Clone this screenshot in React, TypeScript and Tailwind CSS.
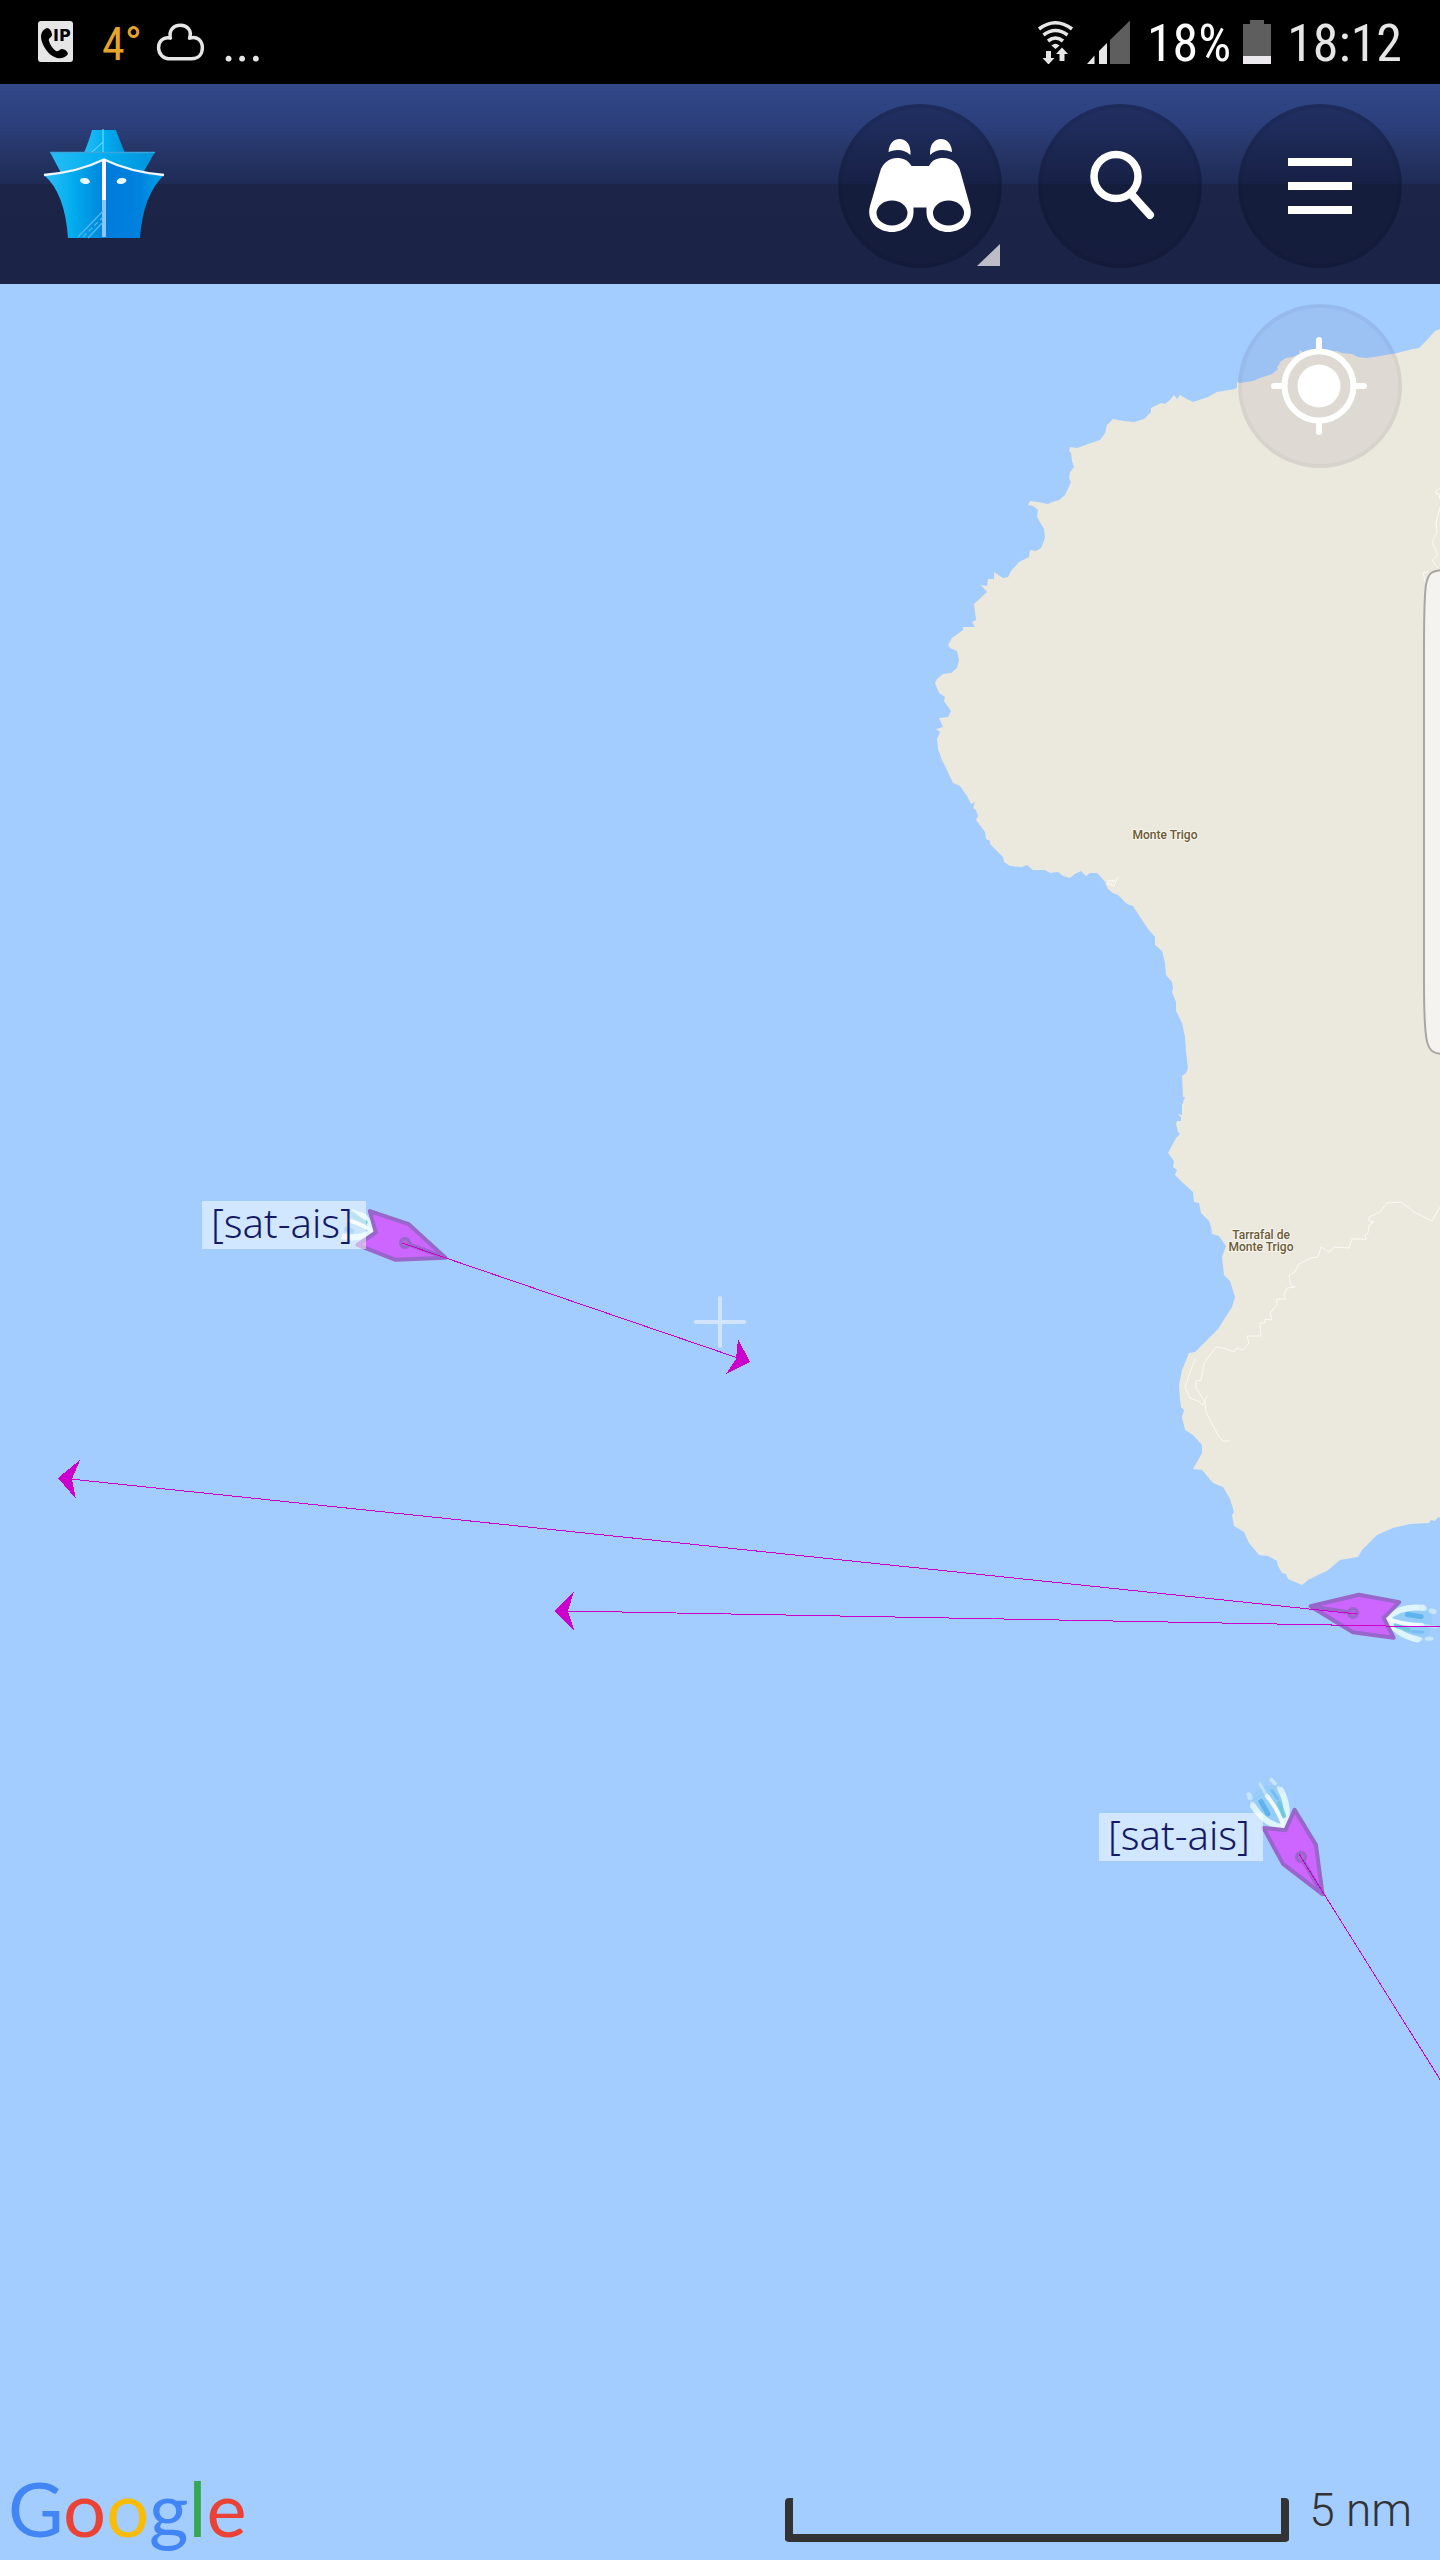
import type { ReactNode } from 'react';

const COAST =
  '1440,329 1435,331 1427,340 1419,348 1413,349 1397,353 1380,356 1367,358 1358,357 1352,354 1342,353 1337,351 1327,352 1318,355 1310,352 1303,352 1299,350 1300,354 1292,357 1286,358 1280,362 1279,365 1277,367 1278,369 1272,374 1260,378 1253,381 1240,383 1237,382 1237,387 1235,389 1223,391 1217,392 1208,397 1193,402 1185,398 1180,395 ' +
  '1177,399 1174,395 1170,400 1165,404 1161,403 1151,408 1151,412 1144,419 1134,422 1124,421 1113,419 1107,425 1105,433 1100,440 1088,444 1077,448 1070,447 1069,451 1071,453 1072,461 1074,467 1070,472 1069,478 1071,482 1065,495 1059,500 1052,502 1048,504 1038,502 1030,501 1028,505 1033,506 1038,510 1037,517 1044,529 1045,538 1041,548 1036,551 1030,550 1029,557 1019,562 1011,571 1008,577 1003,578 994,572 994,579 988,579 987,586 981,585 987,592 974,604 976,620 972,622 975,627 963,627 963,630 952,638 948,645 950,648 957,651 959,660 957,668 951,673 943,674 937,679 935,683 939,693 945,697 944,701 951,711 948,717 939,718 943,727 936,729 940,732 937,739 938,749 942,760 946,768 953,783 960,786 967,796 971,804 975,802 973,808 976,810 978,816 976,820 985,832 986,839 990,841 990,844 1003,857 1004,862 1010,866 1022,867 1027,865 1033,870 1045,870 1050,873 1058,872 1063,876 1070,878 1075,874 1081,871 1086,876 1090,873 1097,873 ' +
  '1100,876 1105,882 1108,889 1113,893 1118,895 1127,904 1133,906 1140,917 1148,929 1155,937 1155,945 1162,951 1165,963 1166,975 1172,982 1173,988 1172,992 1176,1002 1176,1011 1182,1023 1185,1037 1186,1052 1188,1068 1186,1073 1182,1076 1183,1097 1185,1097 1182,1105 1182,1115 1178,1114 1181,1117 1181,1121 1177,1121 1176,1124 1178,1132 1180,1134 1176,1138 1168,1153 1174,1161 1173,1167 1177,1170 1175,1175 1183,1183 1193,1192 1194,1202 1199,1203 1201,1213 1209,1221 1211,1227 1212,1234 ' +
  '1219,1236 1226,1246 1222,1257 1224,1275 1230,1281 1235,1297 1232,1307 1218,1329 1195,1352 1189,1353 1182,1370 1179,1385 1180,1400 1181,1407 1184,1410 1182,1417 1185,1430 1193,1435 1202,1445 1202,1453 1193,1469 1202,1470 1213,1483 1223,1487 1230,1499 1234,1512 1232,1515 1234,1526 1244,1532 1249,1543 1259,1555 1268,1556 1277,1561 1278,1566 1282,1573 1286,1574 1288,1579 1302,1585 1308,1580 1320,1574 1327,1571 1340,1560 1358,1557 1362,1550 1377,1535 1393,1528 1410,1524 1429,1523 1431,1520 1435,1521 1438,1517 1440,1518';

const ROADS = [
  '1440,1207 1432,1221 1424,1217 1414,1212 1401,1202 1387,1203 1380,1212 1369,1217 1369,1221 1374,1222 1369,1225 1368,1233 1365,1235 1366,1240 1362,1239 1352,1239 1349,1248 1334,1247 1329,1252 1321,1247 1318,1257 1311,1258 1303,1262 1299,1264 1295,1272 1289,1275 1291,1286 1295,1287 1287,1288 1284,1295 1286,1299 1277,1299 1277,1305 1270,1313 1272,1320 1265,1319 1265,1323 1260,1323 1261,1336 1247,1336 1249,1343 1243,1350 1237,1348 1234,1352 1223,1348 1216,1347 1204,1363 1201,1380 1196,1381 1196,1388 1205,1402 1206,1412 1218,1435 1223,1441 1230,1441',
  '1195,1359 1185,1387 1190,1398 1198,1401 1203,1405 1207,1396',
  '1440,488 1436,491 1436,494 1439,494 1440,499',
  '1440,507 1436,523 1437,533 1432,542 1438,555 1432,560 1438,568',
  '1426,584 1423,573 1428,572',
  '1107,880 1111,884 1115,880 1109,881 1107,884 1114,886 1116,881 1118,877',
];

const vessels = [
  { id: 'v1', x: 405, y: 1243, heading: 20, wake: 'M-36 -14 H-62 V24 H-30Z' },
  { id: 'v2', x: 1353, y: 1613, heading: 189 },
  { id: 'v3', x: 1301, y: 1857, heading: 60 },
];

const courses = [
  { line: [402, 1243, 738, 1358], head: '750,1362 738,1339 736,1359 726,1374' },
  { line: [1357, 1614, 70, 1479], head: '58,1478 80,1460 72,1479 76,1499' },
  { line: [1440, 1627, 567, 1611], head: '554,1611 574,1591 568,1611 574,1630' },
  { line: [1299, 1854, 1441, 2081], head: '' },
];

const vesselLabels = [
  { x: 202, y: 1201, text: '[sat-ais]' },
  { x: 1099, y: 1813, text: '[sat-ais]' },
];

const logoLetters = [
  { char: 'G', color: 'text-[#4285f4]' },
  { char: 'o', color: 'text-[#ea4335]' },
  { char: 'o', color: 'text-[#fbbc05]' },
  { char: 'g', color: 'text-[#4285f4]' },
  { char: 'l', color: 'text-[#34a853]' },
  { char: 'e', color: 'text-[#ea4335]' },
];

function StatusBar() {
  return (
    <div className="flex h-[84px] items-center justify-between bg-black px-[38px] font-['Roboto_Condensed',Roboto,sans-serif] text-[52px] leading-[52px] text-[#e6e6e6]">
      <div className="flex items-center">
        <svg className="h-[42px] w-[36px]" viewBox="0 0 36 42" aria-hidden="true">
          <rect x="0" y="0" width="35" height="41" rx="3" fill="#e6e6e6" />
          <path
            d="M9 7 C3 9 2 15 4 21 C7 29 12 35 19 37 C24 38 28 36 30 33 C30 31 27 28 24 28 C22 28 21 31 18 30 C15 28 12 24 11 20 C10 17 14 16 14 14 C14 11 12 7 9 7Z"
            fill="#000"
          />
          <text x="15" y="20" fontSize="16" fontWeight="700" fontFamily="DejaVu Sans, sans-serif" fill="#000">
            IP
          </text>
        </svg>
        <span className="ml-7 pt-1 text-[46px] text-[#e5a52b]">4°</span>
        <svg className="ml-3 h-[40px] w-[52px]" viewBox="155 22 52 42" aria-hidden="true">
          <path
            d="M171 39 C163 37 158.500 43 158.500 49 C158.500 56 164 60.500 169 60.500 H193 C200 60.500 204.500 56 204.500 49 C204.500 42 199 36 191 39 C194 30 188 25.500 181.500 25.500 C174 25.500 169 31 171 39Z"
            fill="none"
            stroke="#e6e6e6"
            strokeWidth="3.600"
            strokeLinejoin="round"
          />
        </svg>
        <span className="ml-4 pt-1">...</span>
      </div>
      <div className="flex items-center">
        <svg className="h-[44px] w-[38px]" viewBox="1035 20 38 44" aria-hidden="true">
          <g fill="none" stroke="#e6e6e6" strokeWidth="3.600">
            <path d="M1037 29 Q1053.500 16.500 1070 29" />
            <path d="M1041.500 35 Q1053.500 26 1065.500 35" />
            <path d="M1046 41 Q1053.500 35 1061 41" />
          </g>
          <path d="M1049.500 45.500 Q1053.500 42 1057.500 45.500 L1053.500 49Z" fill="#e6e6e6" />
          <path d="M1044 51 h5 v7 h3.500 l-6 6.500 l-6 -6.500 h3.500Z M1057.500 61 h5 v-7 h3.500 l-6 -6.500 l-6 6.500 h3.500Z" fill="#e6e6e6" />
        </svg>
        <svg className="ml-3 h-[44px] w-[44px]" viewBox="1086 20 44 44" aria-hidden="true">
          <path d="M1086 64 L1093.500 55.500 V64Z M1098 64 V51 L1106 43 V64Z" fill="#e6e6e6" />
          <path d="M1109 64 V40 L1129 20.500 V64Z" fill="#5e5e5e" />
        </svg>
        <span className="ml-4 pt-1 text-white">18%</span>
        <svg className="ml-3 h-[44px] w-[28px]" viewBox="1244 21 28 44" aria-hidden="true">
          <path d="M1251 21 H1265 V25 H1272 V57 H1244 V25 H1251Z" fill="#5e5e5e" />
          <rect x="1244" y="57" width="28" height="8" fill="#ebe8ee" />
        </svg>
        <span className="ml-4 pt-1">18:12</span>
      </div>
    </div>
  );
}

function ShipLogo() {
  return (
    <svg className="h-[112px] w-[122px]" viewBox="43 128 122 112" aria-hidden="true">
      <defs>
        <linearGradient id="tower" x1="0" x2="1">
          <stop offset="0" stopColor="#25bdf5" />
          <stop offset="0.500" stopColor="#00aeef" />
          <stop offset="1" stopColor="#0094dd" />
        </linearGradient>
        <linearGradient id="port" x1="0" x2="1">
          <stop offset="0" stopColor="#2fc0f8" />
          <stop offset="0.500" stopColor="#00abee" />
          <stop offset="1" stopColor="#0085da" />
        </linearGradient>
        <linearGradient id="starboard" x1="0" x2="1">
          <stop offset="0" stopColor="#007bdb" />
          <stop offset="0.600" stopColor="#0082df" />
          <stop offset="1" stopColor="#00a2ea" />
        </linearGradient>
      </defs>
      <path d="M92 130 H116 Q118 136 125 153 H84 Q90 138 92 130Z" fill="url(#tower)" />
      <path d="M50 152 H155 L143 173 L104 160 L61 173Z" fill="url(#tower)" />
      <path d="M50 152.500 H155" stroke="#3aa6e0" strokeWidth="1.500" />
      <path d="M44 175 Q78 172 104 160 V238 H68 Q65 193 44 175Z" fill="url(#port)" />
      <path d="M164 175 Q130 172 104 160 V238 H140 Q143 195 164 175Z" fill="url(#starboard)" />
      <path d="M44 175 Q78 172 104 159.500 Q130 172 164 175" fill="none" stroke="#eef6ff" strokeWidth="2.400" />
      <path d="M104 159 V205" stroke="#fff" strokeWidth="4" />
      <path d="M104 200 V237" stroke="#8cc6f4" strokeWidth="4" />
      <path d="M103 129 V152 M92 152 L103 142" stroke="#8adcf9" strokeWidth="1" />
      <path d="M78 237 L103 211 M88 238 L103 222" stroke="#55b8ee" strokeWidth="1.200" />
      <path d="M83 237 L103 217" stroke="#55b8ee" strokeWidth="1.200" strokeDasharray="5 3" />
      <ellipse cx="85" cy="181" rx="5" ry="3" fill="#e8f8ff" transform="rotate(12 85 181)" />
      <ellipse cx="121.500" cy="181" rx="5" ry="3" fill="#e8f8ff" transform="rotate(-12 121.500 181)" />
    </svg>
  );
}

function RoundButton({ label, className, children }: { label: string; className: string; children: ReactNode }) {
  return (
    <button
      type="button"
      aria-label={label}
      className={`relative flex size-[164px] shrink-0 items-center justify-center rounded-full border-4 ${className}`}
    >
      {children}
    </button>
  );
}

function Header() {
  return (
    <header className="flex h-[200px] items-center justify-between bg-[linear-gradient(to_bottom,#314889_0%,#2c3f7c_20%,#263668_33%,#1f2b56_50%,#1c2547_50%,#1b2447_100%)] pl-[43px] pr-[38px]">
      <a href="#home" aria-label="Home">
        <ShipLogo />
      </a>
      <nav className="flex gap-9 pt-1">
        <RoundButton label="Views" className="border-black/5 bg-[#0c1230]/40">
          <svg className="h-[94px] w-[102px]" viewBox="869 139 102 94" aria-hidden="true">
            <path
              d="M888.500 152 C889 143 894 139 899.500 139 C906 139 911 144 910.500 155 C904 149 896 149 888.500 152Z M952 152 C951.500 143 946.500 139 941 139 C934.500 139 929.500 144 930 155 C936 149 944 149 952 152Z"
              fill="#fff"
            />
            <path
              fillRule="evenodd"
              d="M911.500 166 H929 C932 160 937 158 943 158 C952 158 959 164 960.500 172 L970 206 C974 220 963 232 948 232 C935 232 926.500 223 926.500 212 V207.500 H913.500 V212 C913.500 223 905 232 892 232 C877 232 866 220 870 206 L880 172 C882 164 889 158 897 158 C903 158 908 160 911.500 166Z M876.500 213 A15.500 12.500 0 1 0 907.500 213 A15.500 12.500 0 1 0 876.500 213Z M933 213 A15.500 12.500 0 1 0 964 213 A15.500 12.500 0 1 0 933 213Z"
              fill="#fff"
            />
          </svg>
          <svg className="absolute -bottom-0.5 -right-0.5 h-[22px] w-[23px]" viewBox="0 0 23 22" aria-hidden="true">
            <path d="M23 0 V22 H0Z" fill="#bcbdc7" />
          </svg>
        </RoundButton>
        <RoundButton label="Search" className="border-black/5 bg-[#0c1230]/40">
          <svg className="size-[72px]" viewBox="1084 151 72 72" aria-hidden="true">
            <circle cx="1116" cy="177.500" r="22" fill="none" stroke="#fff" strokeWidth="7.500" />
            <path d="M1132 196 L1150 216" stroke="#fff" strokeWidth="8" strokeLinecap="round" />
          </svg>
        </RoundButton>
        <RoundButton label="Menu" className="border-black/5 bg-[#0c1230]/40">
          <svg className="h-[56px] w-[64px]" viewBox="0 0 64 56" aria-hidden="true">
            <path d="M0 4 H64 M0 28 H64 M0 52 H64" stroke="#fff" strokeWidth="8" />
          </svg>
        </RoundButton>
      </nav>
    </header>
  );
}

// Drawn with the bow pointing right, origin at the GPS antenna
function Vessel({ id, x, y, heading, wake }: { id: string; x: number; y: number; heading: number; wake?: string }) {
  return (
    <g transform={`translate(${x} ${y}) rotate(${heading})`}>
      {wake && (
        <clipPath id={`wake-${id}`}>
          <path d={wake} />
        </clipPath>
      )}
      <g clipPath={wake ? `url(#wake-${id})` : undefined}>
        <g fill="none" strokeLinecap="round">
          <path d="M-34 0 Q-52 -20 -76 -13 Q-84 0 -76 13 Q-52 20 -34 0Z" fill="#8fcdf5" opacity="0.700" />
          <path d="M-34 0 Q-46 -15 -68 -16" stroke="#e6fafc" strokeWidth="6" opacity="0.900" />
          <path d="M-66 -16 L-82 -13" stroke="#d6f0fb" strokeWidth="4" strokeDasharray="5 6" opacity="0.700" />
          <path d="M-34 0 Q-46 15 -68 16" stroke="#e6fafc" strokeWidth="6" opacity="0.900" />
          <path d="M-66 16 L-80 14" stroke="#d6f0fb" strokeWidth="5" strokeDasharray="4 7" opacity="0.700" />
          <path d="M-34 0 Q-52 -4 -70 -1" stroke="#eefaff" strokeWidth="4" />
          <path d="M-70 -1 L-84 -1" stroke="#d6f0fb" strokeWidth="3" opacity="0.600" />
          <path d="M-54 7 L-68 7" stroke="#4daae8" strokeWidth="5" opacity="0.750" />
          <path d="M-44 -6 L-58 -8" stroke="#6cc6d8" strokeWidth="4" opacity="0.900" />
          <path d="M-62 -9 L-72 -8" stroke="#62b4ee" strokeWidth="3" opacity="0.600" />
        </g>
      </g>
      <polygon
        points="43,0 -3,19 -44,18 -31,0 -44,-18 -3,-19"
        fill="#cc66ff"
        stroke="#9966cc"
        strokeWidth="4"
        strokeLinejoin="round"
      />
      <path d="M0 0 H40" stroke="#9966cc" strokeWidth="4" />
      <circle r="4.500" fill="#b266d9" stroke="#9966cc" strokeWidth="3" />
    </g>
  );
}

function MapCanvas() {
  return (
    <svg
      className="absolute inset-0 size-full"
      viewBox="0 284 1440 2276"
      preserveAspectRatio="xMaxYMin slice"
      role="img"
      aria-label="Map"
    >
      <polygon points={COAST} fill="#ebe8dd" />
      {ROADS.map((points) => (
        <polyline key={points} points={points} fill="none" stroke="#fbfaf6" strokeWidth="1" />
      ))}

      <g
        fontFamily="Roboto, sans-serif"
        fontSize="12"
        fontWeight="500"
        textAnchor="middle"
        fill="#6b5b36"
        stroke="#f7f5ef"
        strokeWidth="2"
        paintOrder="stroke"
      >
        <text x="1165" y="839">Monte Trigo</text>
        <text x="1261" y="1239">Tarrafal de</text>
        <text x="1261" y="1251">Monte Trigo</text>
      </g>

      {/* Edge handle */}
      <path
        d="M1442 570 C1424 571 1424 578 1424 650 V980 C1424 1046 1426 1053 1442 1054"
        fill="#f4f3ef"
        stroke="#a8a7a2"
        strokeWidth="2"
      />

      {vessels.map((v) => (
        <Vessel key={v.id} {...v} />
      ))}

      <g stroke="#fff" strokeWidth="4" strokeLinecap="round" opacity="0.500">
        <path d="M696 1322 H744 M720 1298 V1346" />
      </g>

      {courses.map(({ line, head }) => (
        <g key={line.join()} shapeRendering="crispEdges">
          <line x1={line[0]} y1={line[1]} x2={line[2]} y2={line[3]} stroke="#cc00cc" strokeWidth="1" />
          {head && <polygon points={head} fill="#cc00cc" />}
        </g>
      ))}

      {vesselLabels.map((l) => (
        <g key={l.y}>
          <rect x={l.x} y={l.y} width="164" height="48" fill="#fff" fillOpacity="0.500" />
          <text x={l.x + 9} y={l.y + 37} fontFamily="Noto Sans, sans-serif" fontSize="40" fontWeight="300" fill="#141a66">
            {l.text}
          </text>
        </g>
      ))}
    </svg>
  );
}

export default function App() {
  return (
    <div className="flex min-h-screen flex-col bg-[#a3ccff]">
      <StatusBar />
      <Header />
      <main className="relative flex-1 overflow-hidden">
        <MapCanvas />

        <div className="absolute right-[38px] top-5">
          <RoundButton label="My location" className="border-black/[0.03] bg-[#504660]/[0.08]">
            <svg className="size-[98px]" viewBox="0 0 98 98" aria-hidden="true">
              <circle cx="48" cy="49" r="21.500" fill="#fff" />
              <circle cx="48" cy="49" r="34.500" fill="none" stroke="#fff" strokeWidth="6" />
              <path d="M48 3 V13 M48 85 V95 M3 49 H12 M84 49 H93" stroke="#fff" strokeWidth="6" strokeLinecap="round" />
            </svg>
          </RoundButton>
        </div>

        <div className="absolute bottom-2 left-2 font-['Lato',sans-serif] text-[76px] leading-[88px]">
          {logoLetters.map((l, i) => (
            <span key={i} className={l.color}>
              {l.char}
            </span>
          ))}
        </div>

        {/* Scale */}
        <div className="absolute bottom-[18px] right-[28px] flex items-end gap-5 text-[#333]">
          <div className="h-[44px] w-[504px] rounded-sm border-x-8 border-b-8 border-[#333]" />
          <span className="pb-2 font-['Roboto',sans-serif] text-[46px] font-light leading-[48px]">5 nm</span>
        </div>
      </main>
    </div>
  );
}
